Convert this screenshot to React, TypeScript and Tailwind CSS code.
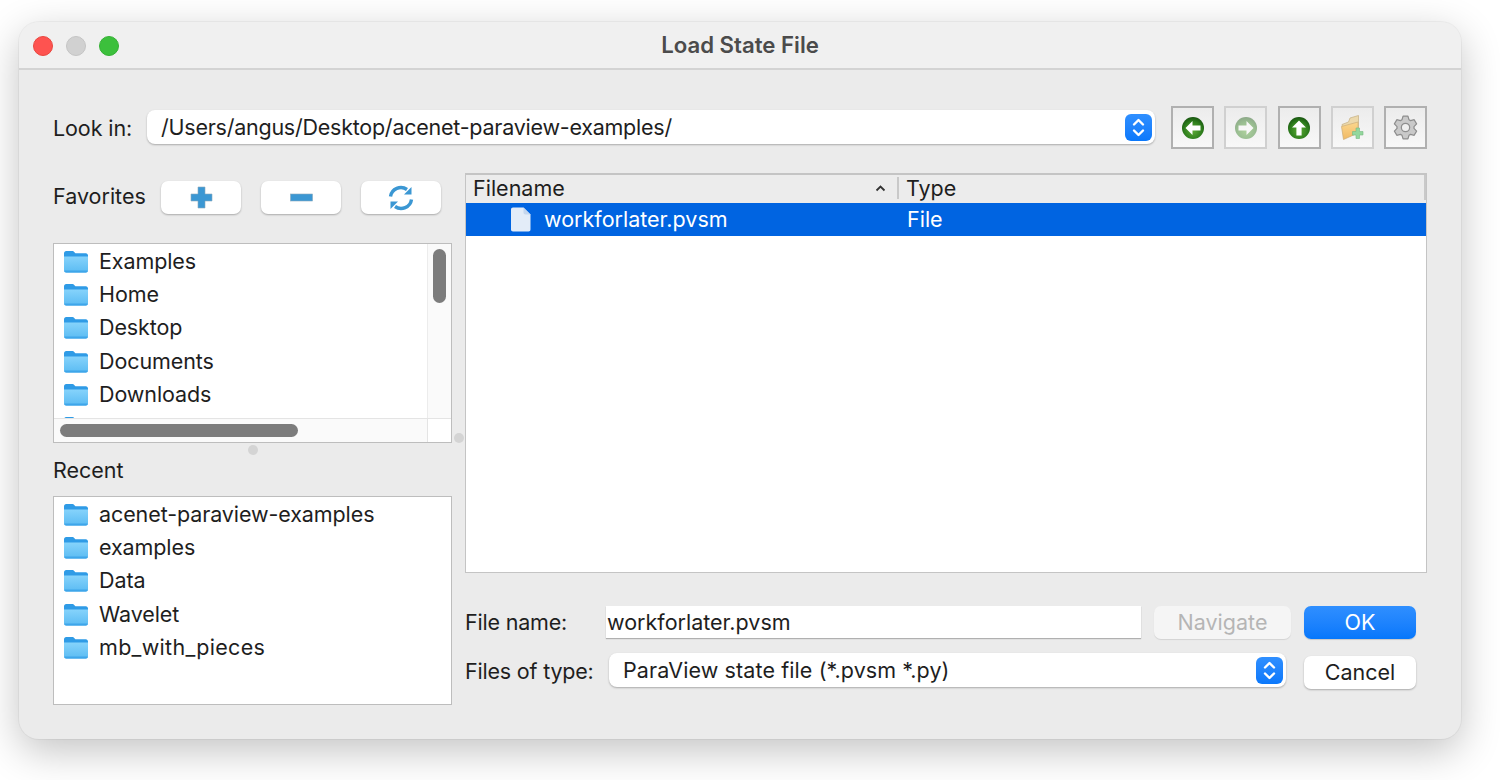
import React from 'react';

const favorites = ['Examples', 'Home', 'Desktop', 'Documents', 'Downloads'];
const recent = ['acenet-paraview-examples', 'examples', 'Data', 'Wavelet', 'mb_with_pieces'];

// six flat teeth, one pointing straight up
const gearPoints = [0, 1, 2, 3, 4, 5]
  .flatMap((i) => {
    const a = i * 60 - 90;
    return [
      [a - 24, 8.2],
      [a - 12, 11.2],
      [a + 12, 11.2],
      [a + 24, 8.2],
    ];
  })
  .map(([deg, r]) => {
    const rad = (deg * Math.PI) / 180;
    return `${(12 + r * Math.cos(rad)).toFixed(2)} ${(12 + r * Math.sin(rad)).toFixed(2)}`;
  });
const gearPath = `M${gearPoints.join('L')}Z`;

const FolderIcon = () => (
  <svg width="26" height="26" viewBox="0 0 26 26" className="shrink-0">
    <defs>
      <linearGradient id="folderFront" x1="0" y1="0" x2="0" y2="1">
        <stop offset="0" stopColor="#86d3fb" />
        <stop offset="1" stopColor="#5cbcf3" />
      </linearGradient>
    </defs>
    <path d="M1 5.500C1 4.100 1.900 3 3.200 3h6.300c.8 0 1.200.3 1.700.9l1.200 1.300h10.400c1.300 0 2.200 1 2.200 2.300V10H1z" fill="#2f9be6" />
    <path d="M1 8.500h24v13.300c0 1.300-.9 2.200-2.200 2.200H3.200C1.900 24 1 23.100 1 21.800z" fill="url(#folderFront)" />
    <path d="M1 22.500h24c0 1.300-.9 2.200-2.200 2.200H3.200C1.900 24.700 1 23.800 1 22.500z" fill="#3ea6ea" />
  </svg>
);

const Stepper = () => (
  <span className="flex h-[27px] w-[27px] shrink-0 items-center justify-center rounded-[6px] bg-gradient-to-b from-[#2f8fff] to-[#0a78fb]">
    <svg width="15" height="21" viewBox="0 0 15 21" fill="none" stroke="#fff" strokeWidth="2.400" strokeLinecap="round" strokeLinejoin="round">
      <path d="M3 7.500 7.500 3l4.500 4.500" />
      <path d="M3 13.500 7.500 18l4.500-4.500" />
    </svg>
  </span>
);

const GreenArrow = ({ rotate, faded }: { rotate: number; faded?: boolean }) => (
  <svg width="24" height="24" viewBox="0 0 24 24" className={faded ? 'opacity-45' : ''}>
    <defs>
      <radialGradient id="greenBall" cx="0.5" cy="0.62" r="0.62">
        <stop offset="0" stopColor="#5dab35" />
        <stop offset="0.65" stopColor="#2f7f1d" />
        <stop offset="1" stopColor="#185510" />
      </radialGradient>
    </defs>
    <circle cx="12" cy="12" r="11" fill="url(#greenBall)" />
    <g transform={`rotate(${rotate} 12 12)`}>
      <path d="M12 4.500 19 11.500H14.600V19.500H9.400V11.500H5z" fill="#fff" />
    </g>
  </svg>
);

const NewFolderIcon = () => (
  <svg width="26" height="26" viewBox="0 0 26 26">
    <defs>
      <linearGradient id="newFolder" x1="0" y1="0" x2="0" y2="1">
        <stop offset="0" stopColor="#fbd78e" />
        <stop offset="1" stopColor="#f1b963" />
      </linearGradient>
    </defs>
    <path d="M3 9.500 9.500 7 11 3l8.500-2.500V18L5 23z" fill="#ecd9ac" stroke="#c9b58a" strokeWidth="0.800" />
    <path d="M2.500 11.500 19 7V18L4.500 24.500z" fill="url(#newFolder)" stroke="#d2b27c" strokeWidth="0.800" />
    <path d="M17 13h3.500v3.500H24V20h-3.500v3.500H17V20h-3.500v-3.500H17z" fill="#93d79d" stroke="#76b982" strokeWidth="0.600" />
  </svg>
);

const GearIcon = () => (
  <svg width="25" height="25" viewBox="0 0 24 24">
    <path d={gearPath} fill="#c9c9c9" stroke="#8e8e8e" strokeWidth="1.200" strokeLinejoin="round" />
    <circle cx="12" cy="12" r="4" fill="#efefef" stroke="#8e8e8e" strokeWidth="1.200" />
  </svg>
);

const ToolButton = ({ children, disabled }: { children: React.ReactNode; disabled?: boolean }) => (
  <div
    className={`flex h-[43px] w-[43px] items-center justify-center border-2 bg-gradient-to-b from-[#ececec] to-[#f8f8f8] ${
      disabled ? 'border-[#d0d0d0]' : 'border-[#b0b0b0]'
    }`}
  >
    {children}
  </div>
);

const FavButton = ({ children }: { children: React.ReactNode }) => (
  <div className="flex h-[33px] w-[80px] items-center justify-center rounded-[7px] bg-white shadow-[0_1px_2px_rgba(0,0,0,0.28)]">
    {children}
  </div>
);

const ListRow = ({ name }: { name: string }) => (
  <div className="flex h-[33.33px] shrink-0 items-center gap-[10px] pl-[9px]">
    <FolderIcon />
    <span className={`whitespace-nowrap ${name === 'mb_with_pieces' ? 'tracking-[0.3px]' : 'tracking-[-0.1px]'}`}>{name}</span>
  </div>
);

export default function App() {
  return (
    <div className="h-[780px] w-[1500px] overflow-hidden bg-white pl-[19px] pt-[22px] font-['Inter','Liberation_Sans',sans-serif] text-[21.500px] text-[#1e1e1e]">
      <div className="flex h-[717px] w-[1442px] flex-col overflow-hidden rounded-[20px] bg-[#ebebeb] shadow-[0_12px_40px_rgba(0,0,0,0.24),0_0_0_1px_rgba(0,0,0,0.04)]">
        {/* title bar */}
        <div className="relative flex h-[48px] shrink-0 items-center justify-center border-b-2 border-[#d3d3d3] bg-[#f0f0f0]">
          <div className="absolute left-[13.500px] top-[14px] flex gap-[13.330px]">
            <span className="h-[20px] w-[20px] rounded-full border border-[#e8473f] bg-[#fe5350]" />
            <span className="h-[20px] w-[20px] rounded-full border border-[#c4c4c4] bg-[#d1d1d1]" />
            <span className="h-[20px] w-[20px] rounded-full border border-[#35b035] bg-[#3cc03c]" />
          </div>
          <span className="text-[22.200px] font-semibold text-[#4b4b4b]">Load State File</span>
        </div>

        <div className="flex flex-1 flex-col px-[34px] pt-[36px]">
          {/* look in row */}
          <div className="flex h-[43px] items-center">
            <span className="w-[94px] shrink-0 pt-[2px] tracking-[-0.1px]">Look in:</span>
            <div className="mb-[1px] flex h-[34px] w-[1008px] items-center justify-between rounded-[8px] bg-white pl-[14px] pr-[3px] shadow-[0_1px_2px_rgba(0,0,0,0.28)]">
              <span className="tracking-[-0.24px]">/Users/angus/Desktop/acenet-paraview-examples/</span>
              <Stepper />
            </div>
            <div className="ml-[16px] flex gap-[10.250px]">
              <ToolButton><GreenArrow rotate={270} /></ToolButton>
              <ToolButton disabled><GreenArrow rotate={90} faded /></ToolButton>
              <ToolButton><GreenArrow rotate={0} /></ToolButton>
              <ToolButton disabled><NewFolderIcon /></ToolButton>
              <ToolButton><GearIcon /></ToolButton>
            </div>
          </div>

          <div className="relative mt-[24px] flex gap-[13px]">
            {/* left column */}
            <div className="flex w-[399px] shrink-0 flex-col">
              <div className="flex h-[41px] items-start pt-[8px]">
                <span className="flex h-[31px] w-[108px] items-center">Favorites</span>
                <div className="flex gap-[20px]">
                  <FavButton>
                    <svg width="23" height="23" viewBox="0 0 23 23">
                      <path d="M8 1h7v7h7v7h-7v7H8v-7H1V8h7z" fill="#3b97d3" stroke="#8aa9bd" strokeWidth="0.600" />
                    </svg>
                  </FavButton>
                  <FavButton>
                    <svg width="23" height="9" viewBox="0 0 23 9">
                      <rect x="0.500" y="1" width="22" height="7" fill="#3b97d3" stroke="#8aa9bd" strokeWidth="0.600" />
                    </svg>
                  </FavButton>
                  <FavButton>
                    <svg width="26" height="26" viewBox="0 0 26 26" fill="none" stroke="#3b97d3" strokeWidth="3.400">
                      <path d="M2.500 11.500A10.500 10.500 0 0 1 19 4.500" />
                      <path d="M23.500 14.500A10.500 10.500 0 0 1 7 21.500" />
                      <path d="M23.500 2V9.500H16z" fill="#3b97d3" stroke="none" />
                      <path d="M2.500 24V16.500H10z" fill="#3b97d3" stroke="none" />
                    </svg>
                  </FavButton>
                </div>
              </div>

              <div className="mt-[29px] flex h-[200px] flex-col border border-[#bdbdbd] bg-white">
                <div className="flex min-h-0 flex-1">
                  <div className="flex min-w-0 flex-1 flex-col overflow-hidden">
                    {favorites.map((name) => (
                      <ListRow key={name} name={name} />
                    ))}
                    <ListRow name="" />
                  </div>
                  <div className="w-[24px] shrink-0 border-l border-[#ececec] bg-[#fafafa] pl-[5px] pt-[5px]">
                    <div className="h-[54px] w-[13px] rounded-full bg-[#7c7c7c]" />
                  </div>
                </div>
                <div className="flex h-[24px] shrink-0 border-t border-[#e4e4e4]">
                  <div className="flex-1 bg-[#fafafa] pl-[6px] pt-[5px]">
                    <div className="h-[13px] w-[238px] rounded-full bg-[#7c7c7c]" />
                  </div>
                  <div className="w-[24px] border-l border-[#e4e4e4] bg-white" />
                </div>
              </div>

              <div className="flex h-[53px] items-center pt-[2px]">Recent</div>

              <div className="flex h-[209px] flex-col border border-[#bdbdbd] bg-white">
                {recent.map((name) => (
                  <ListRow key={name} name={name} />
                ))}
              </div>
            </div>

            {/* right column */}
            <div className="flex w-[962px] shrink-0 flex-col">
              <div className="flex h-[400px] flex-col border border-t-2 border-[#c4c4c4] bg-white">
                <div className="relative flex h-[28px] shrink-0 items-center bg-[#ececec] pb-[2px]">
                  <div className="relative flex h-[22px] w-[433px] items-center border-r-2 border-[#c9c9c9] pl-[7px]">
                    <span>Filename</span>
                    <svg width="11" height="7" viewBox="0 0 11 7" fill="none" stroke="#333" strokeWidth="1.800" className="absolute right-[11px] top-[8px]">
                      <path d="M1.500 5.500 5.500 1.500l4 4" />
                    </svg>
                  </div>
                  <span className="pl-[7px]">Type</span>
                  <div className="absolute right-0 top-0 h-[25px] w-[2px] bg-[#c9c9c9]" />
                </div>
                <div className="flex h-[33px] shrink-0 items-center bg-[#0064e1] text-white">
                  <div className="flex w-[433px] items-center pl-[45px]">
                    <svg width="20" height="25" viewBox="0 0 20 25" className="shrink-0">
                      <path d="M2 0.500h10.500L19.500 7.500V22.500c0 1.200-.8 2-2 2H2c-1.200 0-2-.8-2-2V2.500C0 1.300.8.500 2 .5z" fill="#e3ecf8" />
                      <path d="M12.500 0.500V5.500c0 1.200.8 2 2 2h5z" fill="#c4d6ee" />
                    </svg>
                    <span className="ml-[13px]">workforlater.pvsm</span>
                  </div>
                  <span className="pl-[8px]">File</span>
                </div>
              </div>

              <div className="mt-[33px] flex h-[33px] items-center">
                <span className="w-[141px] shrink-0 tracking-[-0.2px]">File name:</span>
                <div className="flex h-[32px] w-[535px] items-center self-start bg-white pl-[1px] shadow-[0_1px_1px_rgba(0,0,0,0.25)]">workforlater.pvsm</div>
                <div className="ml-[13px] flex h-[33px] w-[137px] items-center justify-center rounded-[7px] bg-[#f5f5f5] text-[#b5b5b5] shadow-[0_1px_1px_rgba(0,0,0,0.1)]">Navigate</div>
                <div className="ml-[13px] flex h-[33px] w-[112px] items-center justify-center rounded-[7px] bg-gradient-to-b from-[#2f8fff] to-[#0577fb] text-white shadow-[0_1px_1px_rgba(0,0,0,0.15)]">OK</div>
              </div>

              <div className="mt-[14px] flex h-[36px]">
                <span className="flex h-[36px] w-[144px] shrink-0 items-center tracking-[-0.2px]">Files of type:</span>
                <div className="flex h-[34px] w-[677px] items-center justify-between rounded-[8px] bg-white pl-[14px] pr-[3px] shadow-[0_1px_2px_rgba(0,0,0,0.28)]">
                  <span className="pt-[1px] tracking-[0.1px]">ParaView state file (*.pvsm *.py)</span>
                  <Stepper />
                </div>
                <div className="ml-[18px] flex h-[33px] w-[112px] items-center justify-center self-end rounded-[7px] bg-white shadow-[0_1px_2px_rgba(0,0,0,0.28)]">Cancel</div>
              </div>
            </div>

            {/* splitter handles */}
            <span className="absolute left-[195px] top-[272px] h-[10px] w-[10px] rounded-full bg-[#d4d4d4]" />
            <span className="absolute left-[401px] top-[260px] h-[10px] w-[10px] rounded-full bg-[#d4d4d4]" />
          </div>
        </div>
      </div>
    </div>
  );
}
